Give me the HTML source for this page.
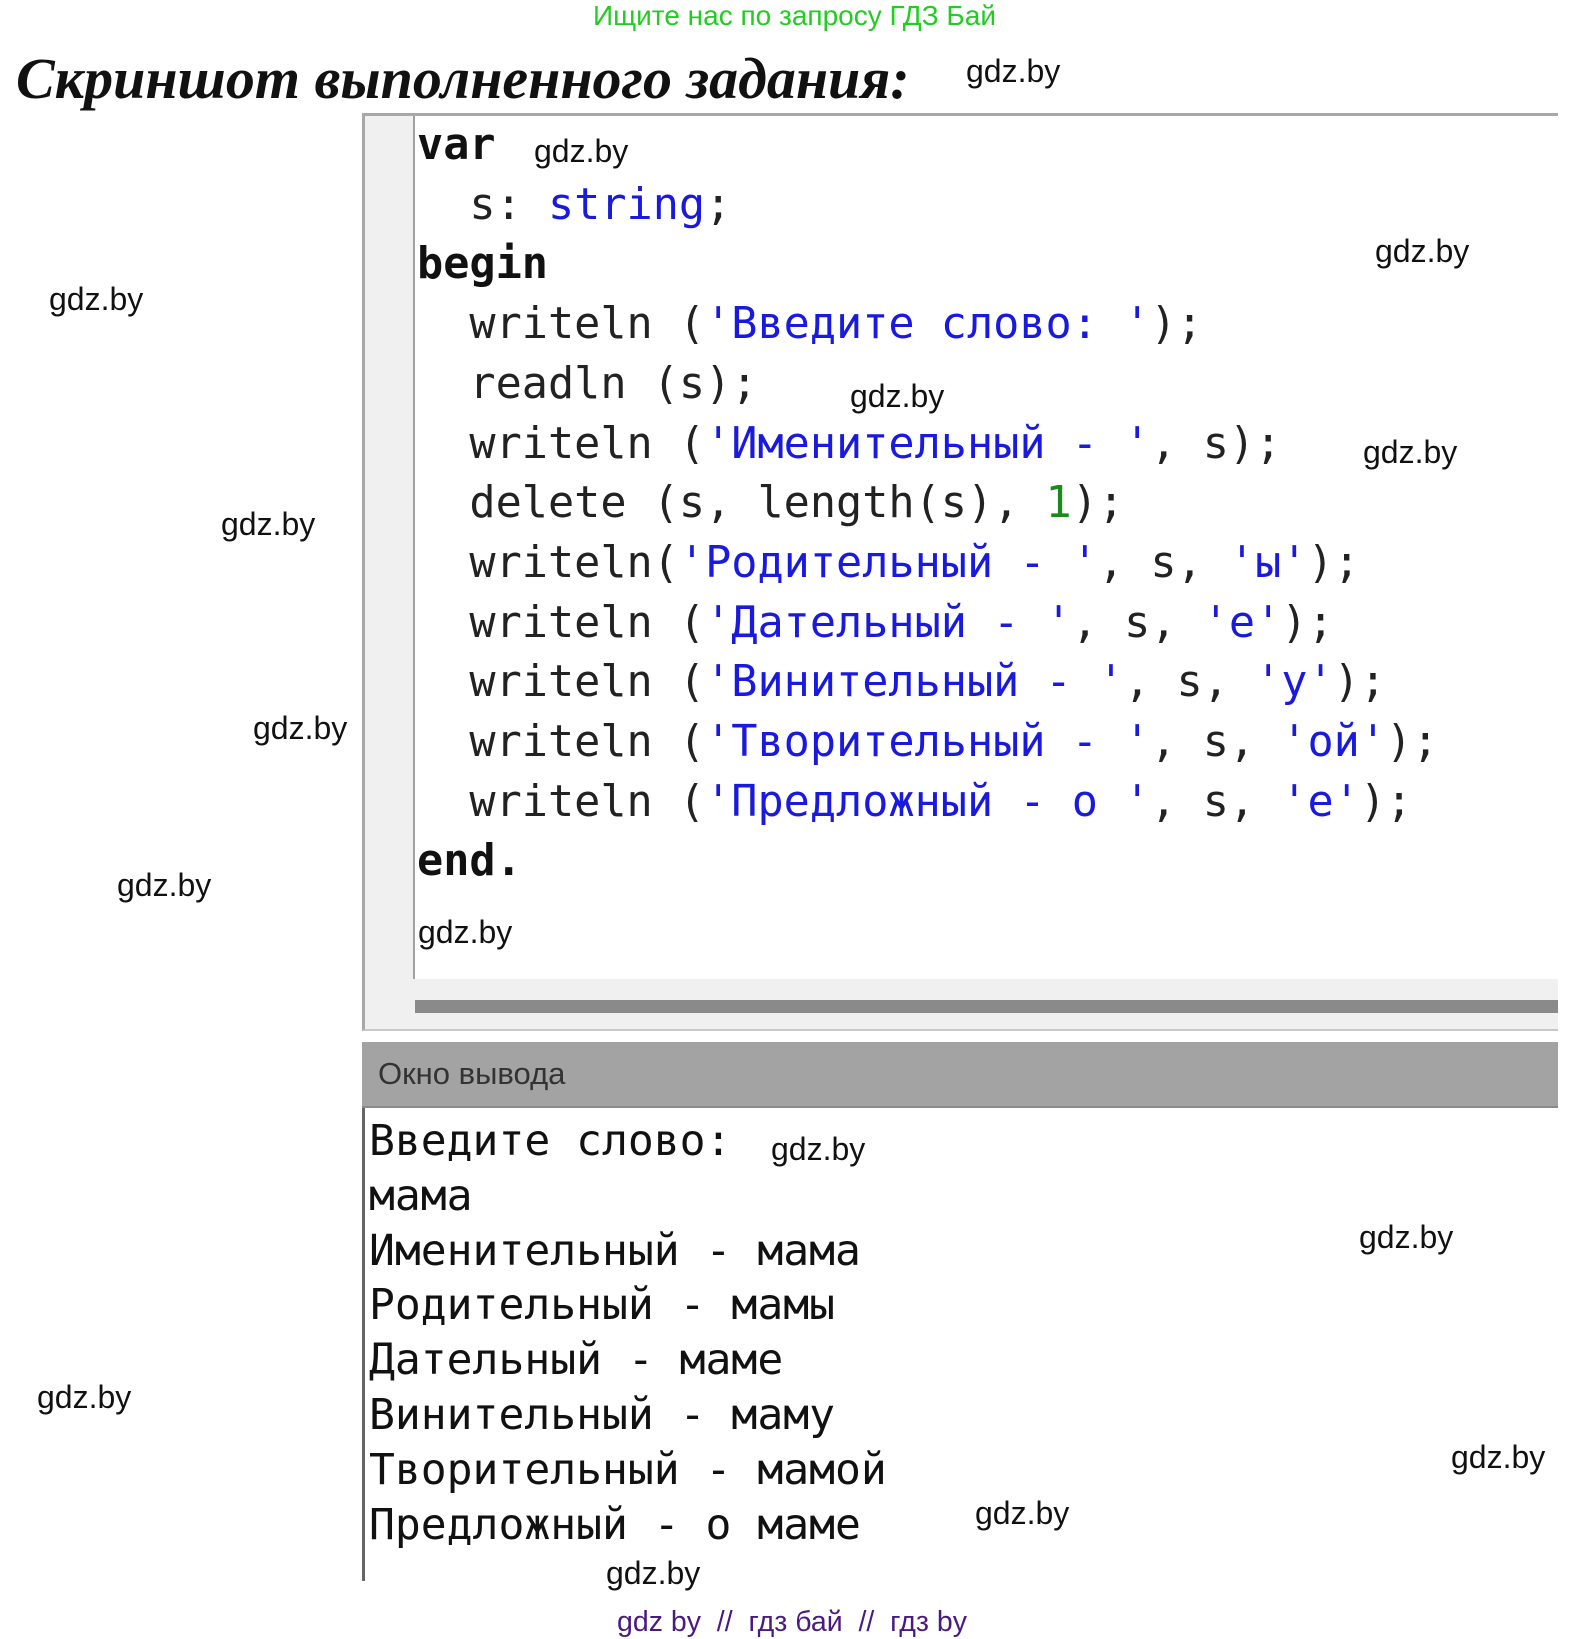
<!DOCTYPE html>
<html><head><meta charset="utf-8"><style>
body{margin:0;width:1590px;height:1639px;background:#fff;position:relative;overflow:hidden;font-family:"Liberation Sans",sans-serif}
.a{position:absolute;white-space:pre}
.w{position:absolute;font-size:32px;line-height:34px;color:#111;white-space:pre}
.code{position:absolute;left:417px;font-family:"DejaVu Sans Mono",monospace;font-size:43.5px;line-height:59.7px;color:#222;white-space:pre;top:116px}
.s{color:#1a1adf}.k{font-weight:bold;color:#111}.n{color:#1a8a1a}
.out{position:absolute;left:369px;top:1114px;font-family:"DejaVu Sans Mono",monospace;font-size:43px;line-height:54.8px;color:#111;white-space:pre}
</style></head><body>
<div class="a" style="left:593px;top:0;font-size:28px;line-height:32px;color:#22cc22">Ищите нас по запросу ГДЗ Бай</div>
<div class="a" style="left:16px;top:44px;font-family:'Liberation Serif',serif;font-weight:bold;font-style:italic;font-size:58px;line-height:70px;color:#111">Скриншот выполненного задания:</div>

<div style="position:absolute;left:362px;top:113px;width:1196px;height:918px;background:#f0f0f0;border-left:3px solid #a8a8a8;border-top:3px solid #a8a8a8;border-bottom:2px solid #c8c8c8;box-sizing:border-box"></div>
<div style="position:absolute;left:413px;top:116px;width:1145px;height:863px;background:#fff;border-left:2px solid #a0a0a0"></div>
<div style="position:absolute;left:415px;top:1000px;width:1143px;height:13px;background:#8a8a8a"></div>

<div class="code"><span class="k">var</span>
  s: <span class="s">string</span>;
<span class="k">begin</span>
  writeln (<span class="s">'Введите слово: '</span>);
  readln (s);
  writeln (<span class="s">'Именительный - '</span>, s);
  delete (s, length(s), <span class="n">1</span>);
  writeln(<span class="s">'Родительный - '</span>, s, <span class="s">'ы'</span>);
  writeln (<span class="s">'Дательный - '</span>, s, <span class="s">'е'</span>);
  writeln (<span class="s">'Винительный - '</span>, s, <span class="s">'у'</span>);
  writeln (<span class="s">'Творительный - '</span>, s, <span class="s">'ой'</span>);
  writeln (<span class="s">'Предложный - о '</span>, s, <span class="s">'е'</span>);
<span class="k">end.</span></div>

<div style="position:absolute;left:362px;top:1042px;width:1196px;height:66px;background:#a3a3a3;border-bottom:2px solid #8a8a8a;box-sizing:border-box"></div>
<div class="a" style="left:378px;top:1056px;font-size:31px;line-height:36px;color:#333">Окно вывода</div>
<div style="position:absolute;left:362px;top:1108px;width:3px;height:473px;background:#666"></div>
<div class="out">Введите слово:
мама
Именительный - мама
Родительный - мамы
Дательный - маме
Винительный - маму
Творительный - мамой
Предложный - о маме</div>

<div class="w" style="left:966px;top:54px">gdz.by</div>
<div class="w" style="left:534px;top:134px">gdz.by</div>
<div class="w" style="left:1375px;top:234px">gdz.by</div>
<div class="w" style="left:49px;top:282px">gdz.by</div>
<div class="w" style="left:850px;top:379px">gdz.by</div>
<div class="w" style="left:1363px;top:435px">gdz.by</div>
<div class="w" style="left:221px;top:507px">gdz.by</div>
<div class="w" style="left:253px;top:711px">gdz.by</div>
<div class="w" style="left:117px;top:868px">gdz.by</div>
<div class="w" style="left:418px;top:915px">gdz.by</div>
<div class="w" style="left:771px;top:1132px">gdz.by</div>
<div class="w" style="left:1359px;top:1220px">gdz.by</div>
<div class="w" style="left:37px;top:1380px">gdz.by</div>
<div class="w" style="left:1451px;top:1440px">gdz.by</div>
<div class="w" style="left:975px;top:1496px">gdz.by</div>
<div class="w" style="left:606px;top:1556px">gdz.by</div>
<div class="a" style="left:617px;top:1606px;font-size:28.5px;line-height:32px;color:#4a1a80">gdz by  //  гдз бай  //  гдз by</div>
</body></html>
